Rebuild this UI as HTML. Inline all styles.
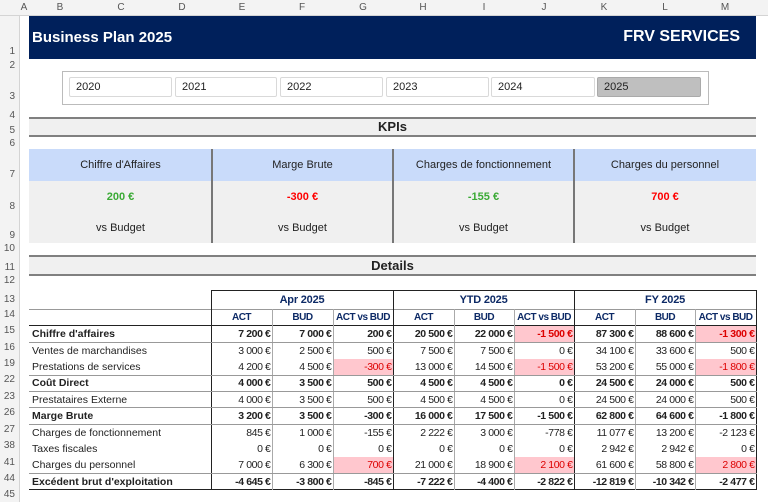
<!DOCTYPE html>
<html><head><meta charset="utf-8"><style>
*{margin:0;padding:0;box-sizing:border-box}
body{width:768px;height:502px;background:#fff;position:relative;overflow:hidden;font-family:"Liberation Sans",sans-serif;color:#222}
.a{position:absolute}
.colh{top:0;height:16px;background:#f3f3f3;border-bottom:1px solid #d4d4d4;left:0;width:768px}
.colh span{position:absolute;top:2px;font-size:10px;color:#555;transform:translateX(-50%)}
.rowh{left:0;top:16px;width:20px;height:486px;background:#f3f3f3;border-right:1px solid #d4d4d4}
.rowh span{position:absolute;right:4px;font-size:10px;color:#555}
.yb{top:77px;height:20px;border:1px solid #d9d9d9;border-radius:2px;font-size:11px;padding:3px 6px;color:#222}
.band{left:29px;width:727px;background:#f0f0f0;border-top:2px solid #808080;border-bottom:2px solid #808080;font-weight:bold;font-size:13px;text-align:center}
.kh{top:149px;height:32px;background:#c9dbfa;font-size:11px;text-align:center;line-height:32px}
.kv{top:181px;height:62px;background:#f0f0f0;font-size:11px;text-align:center}
table{position:absolute;left:29px;top:290px;width:727px;border-collapse:collapse;font-size:10.5px;table-layout:fixed}
td{height:16.4px;padding:0 1px;text-align:right;white-space:nowrap;overflow:hidden;letter-spacing:-0.4px}
td:first-child{text-align:left;padding-left:3px;letter-spacing:0}
.h td{color:#0d2a66;font-weight:bold;text-align:center;letter-spacing:-0.2px}
.h2 td{font-size:10px;letter-spacing:-0.5px}
.b td{font-weight:bold}
.t{border-left:1.5px solid #222}
.g{border-left:1px solid #aaa}
.r{background:#ffc7ce;color:#d00}
.s td{border-bottom:1px solid #999}
</style></head><body>
<div class="a colh">
<span style="left:24px">A</span><span style="left:60px">B</span><span style="left:121px">C</span><span style="left:182px">D</span><span style="left:242px">E</span><span style="left:302px">F</span><span style="left:363px">G</span><span style="left:423px">H</span><span style="left:484px">I</span><span style="left:544px">J</span><span style="left:604px">K</span><span style="left:665px">L</span><span style="left:725px">M</span>
</div>
<div class="a rowh">
<span style="top:30px">1</span><span style="top:44px">2</span><span style="top:75px">3</span><span style="top:94px">4</span><span style="top:109px">5</span><span style="top:122px">6</span><span style="top:153px">7</span><span style="top:185px">8</span><span style="top:214px">9</span><span style="top:227px">10</span><span style="top:246px">11</span><span style="top:259px">12</span><span style="top:278px">13</span><span style="top:293px">14</span><span style="top:309px">15</span><span style="top:326px">16</span><span style="top:342px">19</span><span style="top:358px">22</span><span style="top:375px">23</span><span style="top:391px">26</span><span style="top:408px">27</span><span style="top:424px">38</span><span style="top:441px">41</span><span style="top:457px">44</span><span style="top:473px">45</span>
</div>
<div class="a" style="left:29px;top:16px;width:727px;height:43px;background:#00205b;color:#fff;font-weight:bold">
<div class="a" style="left:3px;top:13px;font-size:15px">Business Plan 2025</div>
<div class="a" style="right:16px;top:12px;font-size:16px">FRV SERVICES</div>
</div>
<div class="a" style="left:62px;top:71px;width:647px;height:34px;border:1px solid #bbb"></div>
<div class="a yb" style="left:69px;width:103px">2020</div>
<div class="a yb" style="left:175px;width:102px">2021</div>
<div class="a yb" style="left:280px;width:103px">2022</div>
<div class="a yb" style="left:386px;width:103px">2023</div>
<div class="a yb" style="left:491px;width:104px">2024</div>
<div class="a yb" style="left:597px;width:104px;background:#bfbfbf;border-color:#aaa">2025</div>
<div class="a band" style="top:117px;height:20px;line-height:16px">KPIs</div>
<div class="a kh" style="left:29px;width:183px">Chiffre d'Affaires</div>
<div class="a kh" style="left:212px;width:181px">Marge Brute</div>
<div class="a kh" style="left:393px;width:181px">Charges de fonctionnement</div>
<div class="a kh" style="left:574px;width:182px">Charges du personnel</div>
<div class="a kv" style="left:29px;width:183px"><div style="margin-top:10px;font-weight:bold;color:#3aaa35">200 €</div><div style="margin-top:19px">vs Budget</div></div>
<div class="a kv" style="left:212px;width:181px"><div style="margin-top:10px;font-weight:bold;color:#f00">-300 €</div><div style="margin-top:19px">vs Budget</div></div>
<div class="a kv" style="left:393px;width:181px"><div style="margin-top:10px;font-weight:bold;color:#3aaa35">-155 €</div><div style="margin-top:19px">vs Budget</div></div>
<div class="a kv" style="left:574px;width:182px"><div style="margin-top:10px;font-weight:bold;color:#f00">700 €</div><div style="margin-top:19px">vs Budget</div></div>
<div class="a" style="left:211px;top:149px;width:2px;height:94px;background:#777"></div>
<div class="a" style="left:392px;top:149px;width:2px;height:94px;background:#777"></div>
<div class="a" style="left:573px;top:149px;width:2px;height:94px;background:#777"></div>
<div class="a band" style="top:255px;height:21px;line-height:17px">Details</div>
<table>
<colgroup><col style="width:182px"><col style="width:61px"><col style="width:61px"><col style="width:60px"><col style="width:61px"><col style="width:60px"><col style="width:60px"><col style="width:61px"><col style="width:60px"><col style="width:61px"></colgroup>
<tr class="h"><td style="background:#fff"></td><td colspan="3" class="t" style="height:19px;font-size:11px;border-top:1.5px solid #222">Apr 2025</td><td colspan="3" class="t" style="font-size:11px;border-top:1.5px solid #222">YTD 2025</td><td colspan="3" class="t" style="font-size:11px;border-top:1.5px solid #222;border-right:1.5px solid #222">FY 2025</td></tr>
<tr class="h h2" style="border-top:1px solid #999"><td style="height:15px"></td><td class="t">ACT</td><td class="g">BUD</td><td class="g">ACT vs BUD</td><td class="t">ACT</td><td class="g">BUD</td><td class="g">ACT vs BUD</td><td class="t">ACT</td><td class="g">BUD</td><td class="g" style="border-right:1.5px solid #222">ACT vs BUD</td></tr>
<tr class="b s" style="border-top:1.5px solid #222"><td>Chiffre d'affaires</td><td class="t">7 200 €</td><td class="g">7 000 €</td><td class="g">200 €</td><td class="t">20 500 €</td><td class="g">22 000 €</td><td class="g r">-1 500 €</td><td class="t">87 300 €</td><td class="g">88 600 €</td><td class="g r" style="border-right:1.5px solid #222">-1 300 €</td></tr>
<tr><td>Ventes de marchandises</td><td class="t">3 000 €</td><td class="g">2 500 €</td><td class="g">500 €</td><td class="t">7 500 €</td><td class="g">7 500 €</td><td class="g">0 €</td><td class="t">34 100 €</td><td class="g">33 600 €</td><td class="g" style="border-right:1.5px solid #222">500 €</td></tr>
<tr class="s"><td>Prestations de services</td><td class="t">4 200 €</td><td class="g">4 500 €</td><td class="g r">-300 €</td><td class="t">13 000 €</td><td class="g">14 500 €</td><td class="g r">-1 500 €</td><td class="t">53 200 €</td><td class="g">55 000 €</td><td class="g r" style="border-right:1.5px solid #222">-1 800 €</td></tr>
<tr class="b s"><td>Coût Direct</td><td class="t">4 000 €</td><td class="g">3 500 €</td><td class="g">500 €</td><td class="t">4 500 €</td><td class="g">4 500 €</td><td class="g">0 €</td><td class="t">24 500 €</td><td class="g">24 000 €</td><td class="g" style="border-right:1.5px solid #222">500 €</td></tr>
<tr class="s"><td>Prestataires Externe</td><td class="t">4 000 €</td><td class="g">3 500 €</td><td class="g">500 €</td><td class="t">4 500 €</td><td class="g">4 500 €</td><td class="g">0 €</td><td class="t">24 500 €</td><td class="g">24 000 €</td><td class="g" style="border-right:1.5px solid #222">500 €</td></tr>
<tr class="b s"><td>Marge Brute</td><td class="t">3 200 €</td><td class="g">3 500 €</td><td class="g">-300 €</td><td class="t">16 000 €</td><td class="g">17 500 €</td><td class="g">-1 500 €</td><td class="t">62 800 €</td><td class="g">64 600 €</td><td class="g" style="border-right:1.5px solid #222">-1 800 €</td></tr>
<tr><td>Charges de fonctionnement</td><td class="t">845 €</td><td class="g">1 000 €</td><td class="g">-155 €</td><td class="t">2 222 €</td><td class="g">3 000 €</td><td class="g">-778 €</td><td class="t">11 077 €</td><td class="g">13 200 €</td><td class="g" style="border-right:1.5px solid #222">-2 123 €</td></tr>
<tr><td>Taxes fiscales</td><td class="t">0 €</td><td class="g">0 €</td><td class="g">0 €</td><td class="t">0 €</td><td class="g">0 €</td><td class="g">0 €</td><td class="t">2 942 €</td><td class="g">2 942 €</td><td class="g" style="border-right:1.5px solid #222">0 €</td></tr>
<tr class="s"><td>Charges du personnel</td><td class="t">7 000 €</td><td class="g">6 300 €</td><td class="g r">700 €</td><td class="t">21 000 €</td><td class="g">18 900 €</td><td class="g r">2 100 €</td><td class="t">61 600 €</td><td class="g">58 800 €</td><td class="g r" style="border-right:1.5px solid #222">2 800 €</td></tr>
<tr class="b" style="border-bottom:1.5px solid #222"><td>Excédent brut d'exploitation</td><td class="t">-4 645 €</td><td class="g">-3 800 €</td><td class="g">-845 €</td><td class="t">-7 222 €</td><td class="g">-4 400 €</td><td class="g">-2 822 €</td><td class="t">-12 819 €</td><td class="g">-10 342 €</td><td class="g" style="border-right:1.5px solid #222">-2 477 €</td></tr>
</table>
</body></html>
